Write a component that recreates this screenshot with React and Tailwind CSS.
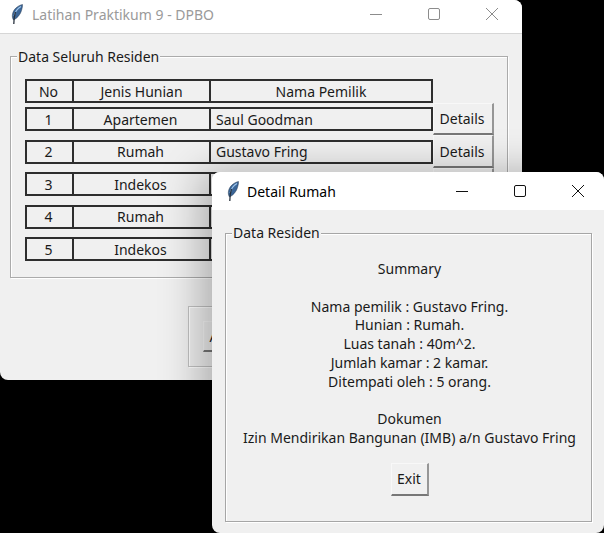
const font = "font-['Noto_Sans','Open_Sans',sans-serif] text-[14px] text-[#1a1a1a]";

function Feather() {
  return (
    <svg width="14" height="21" viewBox="0 0 14 21" className="shrink-0">
      <path d="M12.5 0.5C8 1.5 3.5 5 2.5 10C2 12.5 2.5 14.5 3.5 16C7 14.5 10.5 10.5 11.5 6.5C12.2 4 12.7 2 12.5 0.5Z" fill="#3a6597" stroke="#2c3e55" strokeWidth="0.5" />
      <path d="M11 2.5C7.5 4.5 5 8 4.2 12" stroke="#9cc3ea" strokeWidth="1.2" fill="none" />
      <path d="M5.5 8C4.5 11 3.8 15 3.8 20" stroke="#26303c" strokeWidth="1.3" fill="none" />
    </svg>
  );
}

function TitleBar({ title, active, className, iconGap, textGap, closeGap }) {
  const stroke = active ? "#111111" : "#8c8c8c";
  return (
    <div className={`flex items-center bg-white ${className}`}>
      <div className={iconGap}><Feather /></div>
      <span className={`${textGap} ${active ? "text-black" : "text-[#9a9a9a]"}`}>{title}</span>
      <div className={`ml-auto flex items-center ${closeGap}`}>
        <svg width="46" height="14" viewBox="0 0 46 14"><path d="M17 7.5H29" stroke={stroke} /></svg>
        <svg width="46" height="14" viewBox="0 0 46 14" className="ml-[12px]">
          <rect x="17.5" y="1.5" width="11" height="11" rx="1.5" fill="none" stroke={stroke} />
        </svg>
        <svg width="46" height="14" viewBox="0 0 46 14" className="ml-[12px]">
          <path d="M17 1L29 13M29 1L17 13" stroke={stroke} />
        </svg>
      </div>
    </div>
  );
}

function Cell({ className, children }) {
  return (
    <div className={`flex items-center border-2 border-[#2e2e2e] -ml-[2px] first:ml-0 ${className}`}>
      {children}
    </div>
  );
}

function RaisedButton({ className, children }) {
  return (
    <div className={`flex items-center justify-center bg-[#f0f0f0] border border-t-[#f8f8f8] border-l-[#f8f8f8] border-r-2 border-b-2 border-r-[#969696] border-b-[#777777] ${className}`}>
      {children}
    </div>
  );
}

const rows = [
  { no: "1", jenis: "Apartemen", nama: "Saul Goodman", h: "h-[32px]" },
  { no: "2", jenis: "Rumah", nama: "Gustavo Fring", h: "h-[33px]" },
  { no: "3", jenis: "Indekos", nama: "", h: "h-[32px]" },
  { no: "4", jenis: "Rumah", nama: "", h: "h-[33px]" },
  { no: "5", jenis: "Indekos", nama: "", h: "h-[32px]" },
];

function MainWindow() {
  return (
    <div className="absolute left-0 top-0 h-[380px] w-[522px] overflow-hidden rounded-b-[8px] rounded-tr-[8px] bg-[#f0f0f0]">
      <div className="border-b border-[#d6d6d6]">
        <TitleBar
          title="Latihan Praktikum 9 - DPBO"
          className="h-[33px] pb-[5px]"
          iconGap="ml-[10px]"
          textGap="ml-[8px]"
          closeGap="mr-[7px]"
        />
      </div>
      <fieldset className="mx-[10px] mt-[13px] h-[231px] w-[498px] border border-[#ababab] pl-[14px] pt-[13px] shadow-[inset_1px_1px_0_#fff,1px_1px_0_#fff]">
        <legend className="-ml-[8px] bg-[#f0f0f0] px-[1px] leading-[19px]">Data Seluruh Residen</legend>
        <div className="flex h-[24px]">
          <Cell className="h-[24px] w-[49px] justify-center pr-[2px]">No</Cell>
          <Cell className="h-[24px] w-[139px] justify-center">Jenis Hunian</Cell>
          <Cell className="h-[24px] w-[224px] justify-center">Nama Pemilik</Cell>
        </div>
        {rows.map((row) => (
          <div key={row.no} className={`flex items-center ${row.h}`}>
            <Cell className="h-[24px] w-[49px] justify-center pr-[2px]">{row.no}</Cell>
            <Cell className="h-[24px] w-[139px] justify-center pr-[2px]">{row.jenis}</Cell>
            <Cell className="h-[24px] w-[224px] pl-[5px]">{row.nama}</Cell>
            <RaisedButton className="h-full w-[61px] pr-[2px]">Details</RaisedButton>
          </div>
        ))}
      </fieldset>
      <div className="ml-[188px] mt-[28px] flex h-[61px] w-[120px] items-center border border-[#c2c2c2] pl-[14px] shadow-[inset_1px_1px_0_#fff,1px_1px_0_#fff]">
        <RaisedButton className="h-[31px] w-[40px]">Add</RaisedButton>
      </div>
    </div>
  );
}

function DetailWindow() {
  return (
    <div className="absolute left-[212px] top-[172px] h-[361px] w-[392px] overflow-hidden rounded-[8px] bg-[#f0f0f0] shadow-[-12px_0_40px_rgba(0,0,0,0.28)]">
      <TitleBar
        title="Detail Rumah"
        active
        className="h-[38px]"
        iconGap="ml-[14px]"
        textGap="ml-[7px]"
        closeGap="mr-[3px]"
      />
      <fieldset className="mx-[13px] mt-[13px] h-[299px] w-[367px] border border-[#a6a6a6] shadow-[inset_1px_1px_0_#fff,1px_1px_0_#fff]">
        <legend className="ml-[6px] bg-[#f0f0f0] px-[1px] leading-[20px]">Data Residen</legend>
        <div className="mt-[17px] flex flex-col items-center pl-[2px] leading-[18.8px]">
          <p>Summary</p>
          <p className="mt-[18.8px]">Nama pemilik : Gustavo Fring.</p>
          <p>Hunian : Rumah.</p>
          <p>Luas tanah : 40m^2.</p>
          <p>Jumlah kamar : 2 kamar.</p>
          <p>Ditempati oleh : 5 orang.</p>
          <p className="mt-[18.8px]">Dokumen</p>
          <p>Izin Mendirikan Bangunan (IMB) a/n Gustavo Fring</p>
          <RaisedButton className="mt-[15px] h-[33px] w-[38px]">Exit</RaisedButton>
        </div>
      </fieldset>
    </div>
  );
}

export default function App() {
  return (
    <div className={`relative h-[533px] w-[604px] overflow-hidden bg-black ${font}`}>
      <MainWindow />
      <DetailWindow />
    </div>
  );
}
